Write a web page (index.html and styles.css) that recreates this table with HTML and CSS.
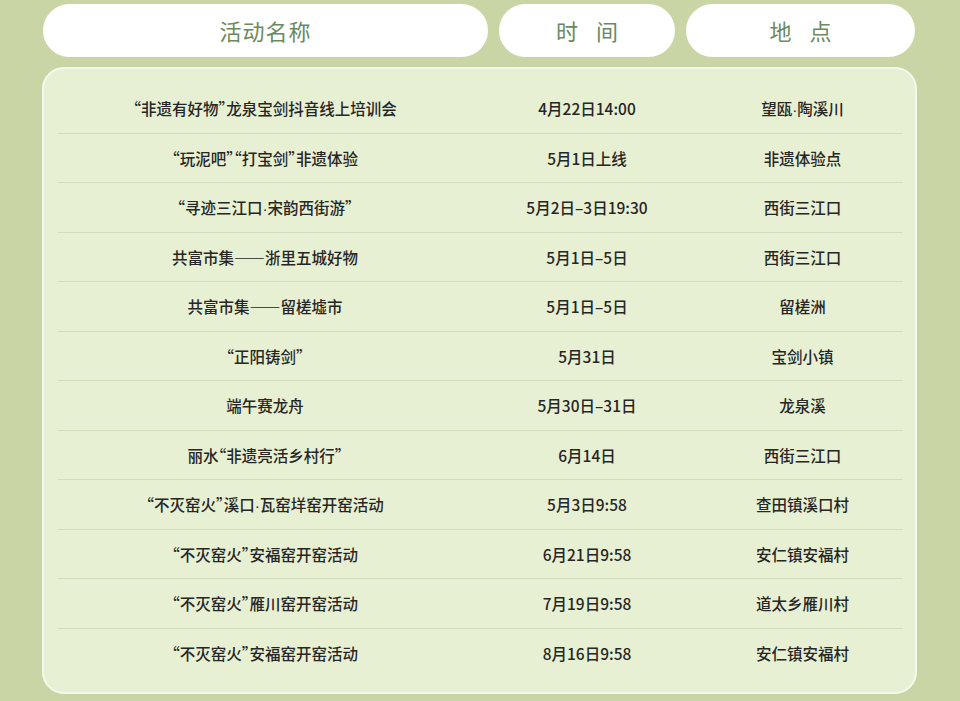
FILE: index.html
```html
<!DOCTYPE html>
<html lang="zh-CN">
<head>
<meta charset="utf-8">
<title>活动安排</title>
<link rel="stylesheet" href="styles.css">
</head>
<body>
<div class="page">
  <div class="head">
    <div class="pill">活动名称</div>
    <div class="pill spaced">时间</div>
    <div class="pill spaced">地点</div>
  </div>
  <div class="card">
    <div class="row"><span>“非遗有好物”龙泉宝剑抖音线上培训会</span><span>4月22日14:00</span><span>望瓯<i class="dot">·</i>陶溪川</span></div>
    <div class="row"><span>“玩泥吧”“打宝剑”非遗体验</span><span>5月1日上线</span><span>非遗体验点</span></div>
    <div class="row"><span>“寻迹三江口<i class="dot">·</i>宋韵西街游”</span><span>5月2日–3日19:30</span><span>西街三江口</span></div>
    <div class="row"><span>共富市集——浙里五城好物</span><span>5月1日–5日</span><span>西街三江口</span></div>
    <div class="row"><span>共富市集——留槎墟市</span><span>5月1日–5日</span><span>留槎洲</span></div>
    <div class="row"><span>“正阳铸剑”</span><span>5月31日</span><span>宝剑小镇</span></div>
    <div class="row"><span>端午赛龙舟</span><span>5月30日–31日</span><span>龙泉溪</span></div>
    <div class="row"><span>丽水“非遗亮活乡村行”</span><span>6月14日</span><span>西街三江口</span></div>
    <div class="row"><span>“不灭窑火”溪口<i class="dot">·</i>瓦窑垟窑开窑活动</span><span>5月3日9:58</span><span>查田镇溪口村</span></div>
    <div class="row"><span>“不灭窑火”安福窑开窑活动</span><span>6月21日9:58</span><span>安仁镇安福村</span></div>
    <div class="row"><span>“不灭窑火”雁川窑开窑活动</span><span>7月19日9:58</span><span>道太乡雁川村</span></div>
    <div class="row"><span>“不灭窑火”安福窑开窑活动</span><span>8月16日9:58</span><span>安仁镇安福村</span></div>
  </div>
</div>
</body>
</html>
```
FILE: styles.css
```css
html, body {
  margin: 0;
  padding: 0;
  background: #cad5a6;
}
body {
  font-family: "Noto Sans CJK SC", "Noto Sans", sans-serif;
  height: 701px;
  overflow: hidden;
}
.page {
  width: 875px;
  margin-left: 42px;
  padding-top: 4px;
}
.head {
  display: grid;
  grid-template-columns: 445px 176px 229px;
  column-gap: 11px;
  margin-left: 1px;
}
.pill {
  height: 53px;
  border-radius: 27px;
  background: #ffffff;
  color: #6a8a5e;
  font-size: 22px;
  font-weight: 400;
  line-height: 52px;
  text-align: center;
  letter-spacing: 1px;
}
.pill.spaced {
  letter-spacing: 18px;
  text-indent: 18px;
}
.card {
  margin-top: 10px;
  box-sizing: border-box;
  height: 627px;
  background: #e8f0d3;
  border: 2px solid #f5f9ec;
  border-radius: 22px;
  padding: 15px 12px 0 14px;
}
.row {
  display: grid;
  grid-template-columns: 414px 230px 1fr;
  height: 49.5px;
  box-sizing: border-box;
  border-bottom: 1px solid #d3ddb9;
  align-items: center;
  font-size: 15.5px;
  font-weight: 500;
  color: #262626;
  text-align: center;
  font-feature-settings: "halt";
}
.row:last-child {
  border-bottom: none;
}
.dot {
  font-style: normal;
  font-family: "Liberation Sans", sans-serif;
}
```
